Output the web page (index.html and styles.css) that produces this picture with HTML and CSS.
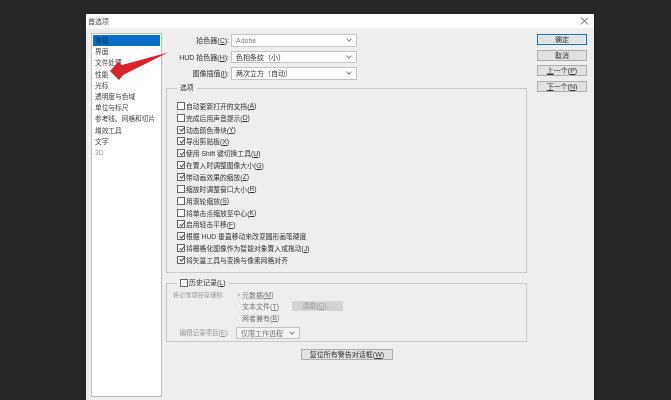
FILE: index.html
```html
<!DOCTYPE html>
<html lang="zh-CN">
<head>
    <meta charset="UTF-8">
    <title>首选项</title>
    <link rel="stylesheet" href="styles.css">
</head>
<body>
    <div class="dialog">
        <div class="titlebar">
            <span>首选项</span>
            <svg class="close" width="9" height="9" viewBox="0 0 9 9"><path d="M1 0.5L8 7.5M8 0.5L1 7.5" stroke="#555" stroke-width="1" fill="none"/></svg>
        </div>
        <div class="main">
            <ul class="nav">
                <li class="selected">常规</li>
                <li>界面</li>
                <li>文件处理</li>
                <li>性能</li>
                <li>光标</li>
                <li>透明度与色域</li>
                <li>单位与标尺</li>
                <li>参考线、网格和切片</li>
                <li>增效工具</li>
                <li>文字</li>
                <li class="faint">3D</li>
            </ul>
            <div class="center">
                <div class="pickers">
                    <div class="picker"><label>拾色器(<u>C</u>):</label><div class="select latin">Adobe<span class="caret"></span></div></div>
                    <div class="picker"><label>HUD 拾色器(<u>H</u>):</label><div class="select">色相条纹（小）<span class="caret"></span></div></div>
                    <div class="picker"><label>图像插值(<u>I</u>):</label><div class="select">两次立方（自动）<span class="caret"></span></div></div>
                </div>
                <fieldset class="options">
                    <legend>选项</legend>
                    <div class="row"><span class="check"></span>自动更新打开的文档(<u>A</u>)</div>
                    <div class="row"><span class="check"></span>完成后用声音提示(<u>D</u>)</div>
                    <div class="row"><span class="check on"></span>动态颜色滑块(<u>Y</u>)</div>
                    <div class="row"><span class="check on"></span>导出剪贴板(<u>X</u>)</div>
                    <div class="row"><span class="check on"></span>使用 Shift 键切换工具(<u>U</u>)</div>
                    <div class="row"><span class="check on"></span>在置入时调整图像大小(<u>G</u>)</div>
                    <div class="row"><span class="check on"></span>带动画效果的缩放(<u>Z</u>)</div>
                    <div class="row"><span class="check"></span>缩放时调整窗口大小(<u>R</u>)</div>
                    <div class="row"><span class="check"></span>用滚轮缩放(<u>S</u>)</div>
                    <div class="row"><span class="check"></span>将单击点缩放至中心(<u>K</u>)</div>
                    <div class="row"><span class="check on"></span>启用轻击平移(<u>F</u>)</div>
                    <div class="row"><span class="check on"></span>根据 HUD 垂直移动来改变圆形画笔硬度</div>
                    <div class="row"><span class="check on"></span>将栅格化图像作为智能对象置入或拖动(<u>J</u>)</div>
                    <div class="row"><span class="check on"></span>将矢量工具与变换与像素网格对齐</div>
                </fieldset>
                <fieldset class="history">
                    <legend><span class="check"></span>历史记录(<u>L</u>)</legend>
                    <div class="history-store">
                        <div class="history-label">将记录项目存储到:</div>
                        <div class="radios">
                            <div class="radio-row"><span class="radio on"></span>元数据(<u>M</u>)</div>
                            <div class="radio-row"><span class="radio"></span>文本文件(<u>T</u>)<span class="choose">选取(<u>O</u>)...</span></div>
                            <div class="radio-row"><span class="radio"></span>两者兼有(<u>B</u>)</div>
                        </div>
                    </div>
                    <div class="history-edit">
                        <div class="history-label">编辑记录项目(<u>E</u>):</div>
                        <div class="select small">仅限工作进程<span class="caret"></span></div>
                    </div>
                </fieldset>
                <div class="reset-wrap"><span class="btn reset">复位所有警告对话框(<u>W</u>)</span></div>
            </div>
            <div class="actions">
                <span class="btn primary">确定</span>
                <span class="btn">取消</span>
                <span class="btn"><u>上</u>一个(<u>P</u>)</span>
                <span class="btn"><u>下</u>一个(<u>N</u>)</span>
            </div>
        </div>
    </div>
    <svg class="arrow" width="70" height="40" viewBox="0 0 70 40"><polygon points="60,2.5 14,15 10,12 2,21 11,30 15,25" fill="#d9232a"/></svg>
</body>
</html>
```

FILE: styles.css
```css
body {
    margin: 0;
    height: 400px;
    overflow: hidden;
    background-color: #272727;
    font-family: "Liberation Sans", "Noto Sans CJK SC", sans-serif;
    font-size: 7px;
    color: #333;
}

.dialog {
    width: 508px;
    height: 386px;
    margin: 14px 0 0 86px;
    background-color: #eeeeee;
    display: flex;
    flex-direction: column;
    box-shadow: 1px 0 0 #1b1b1b;
    filter: blur(0.35px);
}

.titlebar {
    height: 14px;
    padding: 0 5px 0 2px;
    background-color: white;
    display: flex;
    justify-content: space-between;
    align-items: center;
    color: #555;
}

.main {
    flex: 1;
    min-height: 0;
    display: flex;
    padding: 5px 7px 3px 5px;
}

.nav {
    list-style: none;
    margin: 0;
    padding: 1px;
    width: 67px;
    background-color: white;
    border: 1px solid #bdbdbd;
    flex-shrink: 0;
    font-size: 6.7px;
}

.nav li {
    height: 11.2px;
    line-height: 11px;
    padding-left: 2px;
    white-space: nowrap;
    color: #444;
}

.nav .selected {
    background-color: #0a6cc4;
    color: #0b3a66;
}

.nav .faint {
    color: #999;
}

.center {
    width: 361px;
    margin-left: 4px;
    display: flex;
    flex-direction: column;
    flex-shrink: 0;
}

.pickers {
    display: flex;
    flex-direction: column;
    gap: 4px;
    height: 50px;
    margin-top: 1px;
}

.picker {
    display: flex;
    align-items: center;
    height: 12.5px;
}

.picker label {
    width: 63px;
    text-align: right;
    margin-right: 2px;
    white-space: nowrap;
}

.select {
    height: 100%;
    box-sizing: border-box;
    width: 126px;
    padding: 0 4px;
    background-color: white;
    border: 1px solid #c4c4c4;
    display: flex;
    justify-content: space-between;
    align-items: center;
    white-space: nowrap;
}

.select.latin {
    color: #777;
}

.select.small {
    width: 64px;
    height: 12px;
    color: #777;
    background-color: #f4f4f4;
}

.caret {
    width: 3px;
    height: 3px;
    border-right: 1px solid #888;
    border-bottom: 1px solid #888;
    transform: rotate(45deg);
    margin: 0 1px 2px 0;
}

fieldset {
    margin: 0;
    padding: 0;
    min-width: 0;
    border: 1px solid #c9c9c9;
}

legend {
    margin-left: 10px;
    padding: 0 3px;
    line-height: 10px;
    display: flex;
    align-items: center;
}

.options {
    height: 190px;
    box-sizing: border-box;
    padding: 7px 0 0 10px;
    margin-top: -1px;
    font-size: 6.8px;
}

.options legend {
    margin-left: 0;
}

.row {
    height: 11.85px;
    display: flex;
    align-items: center;
    white-space: nowrap;
}

.check {
    width: 6px;
    height: 6px;
    margin-right: 1px;
    border: 1px solid #666;
    background-color: #fbfbfb;
    display: flex;
    align-items: center;
    justify-content: center;
    flex-shrink: 0;
}

.check.on::after {
    content: "";
    width: 2px;
    height: 4px;
    border-right: 1px solid #444;
    border-bottom: 1px solid #444;
    transform: rotate(40deg) translate(0, -1px);
}

.history {
    height: 64px;
    box-sizing: border-box;
    margin-top: 5px;
    padding-top: 1px;
    color: #999;
}

.history legend {
    color: #333;
}

.history-store {
    display: flex;
}

.history-label {
    width: 57px;
    text-align: right;
    white-space: nowrap;
    line-height: 12px;
    flex-shrink: 0;
    font-size: 6.2px;
}

.radios {
    margin-left: 12px;
    color: #777;
}

.radio-row {
    height: 11.6px;
    display: flex;
    align-items: center;
    white-space: nowrap;
}

.radio {
    width: 4px;
    height: 4px;
    border-radius: 50%;
    background-color: #f6f6f6;
    border: 1px solid #dedede;
    display: flex;
    align-items: center;
    justify-content: center;
}

.radio.on::after {
    content: "";
    width: 2px;
    height: 2px;
    border-radius: 50%;
    background-color: #aaa;
}

.choose {
    width: 51px;
    height: 10px;
    line-height: 10px;
    margin-left: 13px;
    text-align: center;
    background-color: #d4d4d4;
    color: #999;
}

.history-edit {
    display: flex;
    align-items: center;
    margin-top: 3px;
}

.history-edit .history-label {
    width: 62px;
    margin-right: 7px;
    font-size: 6.5px;
}

.reset-wrap {
    margin: 7px 0 0 135px;
}

.btn {
    display: block;
    box-sizing: border-box;
    height: 11px;
    line-height: 9px;
    text-align: center;
    background-color: #e1e1e1;
    border: 1px solid #adadad;
    white-space: nowrap;
}

.reset {
    width: 92px;
}

.actions {
    display: flex;
    flex-direction: column;
    gap: 4.7px;
    width: 50px;
    margin: 1px 0 0 10px;
}

.primary {
    border: 1px solid #1f6fb0;
    box-shadow: inset 0 0 0 1px #e6eef5;
}

u {
    text-decoration-thickness: 1px;
}

/* annotation drawn over the dialog */
.arrow {
    position: absolute;
    left: 108px;
    top: 50px;
}
```
